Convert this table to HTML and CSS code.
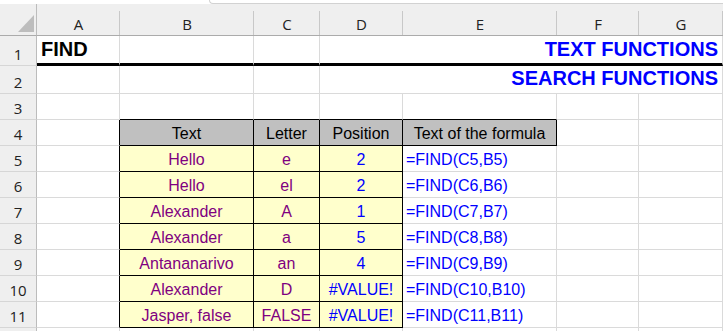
FILE: index.html
```html
<!DOCTYPE html>
<html>
<head>
<meta charset="utf-8">
<link rel="stylesheet" href="styles.css">
</head>
<body>
<div class="top"><div class="bar"></div></div>
<div class="sheet">
  <div class="corner"><svg width="16" height="17" viewBox="0 0 16 17"><polygon points="16,0 16,17 0,17" fill="#bdbdbd"/></svg></div>
  <div class="ch">A</div><div class="ch">B</div><div class="ch">C</div><div class="ch">D</div><div class="ch">E</div><div class="ch">F</div><div class="ch">G</div>

  <div class="rh">1</div>
  <div class="c thick title first">FIND</div><div class="c thick"></div><div class="c thick"></div>
  <div class="c thick title right span4">TEXT FUNCTIONS</div>

  <div class="rh">2</div>
  <div class="c"></div><div class="c"></div><div class="c"></div>
  <div class="c title right span4 r2">SEARCH FUNCTIONS</div>

  <div class="rh">3</div>
  <div class="c"></div><div class="c tt"></div><div class="c tt"></div><div class="c tt"></div><div class="c tt"></div><div class="c"></div><div class="c"></div>

  <div class="rh">4</div>
  <div class="c tl"></div><div class="c th">Text</div><div class="c th">Letter</div><div class="c th">Position</div><div class="c th">Text of the formula</div><div class="c"></div><div class="c"></div>

  <div class="rh">5</div>
  <div class="c tl"></div><div class="c td">Hello</div><div class="c td">e</div><div class="c td num">2</div><div class="c f">=FIND(C5,B5)</div><div class="c"></div><div class="c"></div>

  <div class="rh">6</div>
  <div class="c tl"></div><div class="c td">Hello</div><div class="c td">el</div><div class="c td num">2</div><div class="c f">=FIND(C6,B6)</div><div class="c"></div><div class="c"></div>

  <div class="rh">7</div>
  <div class="c tl"></div><div class="c td">Alexander</div><div class="c td">A</div><div class="c td num">1</div><div class="c f">=FIND(C7,B7)</div><div class="c"></div><div class="c"></div>

  <div class="rh">8</div>
  <div class="c tl"></div><div class="c td">Alexander</div><div class="c td">a</div><div class="c td num">5</div><div class="c f">=FIND(C8,B8)</div><div class="c"></div><div class="c"></div>

  <div class="rh">9</div>
  <div class="c tl"></div><div class="c td">Antananarivo</div><div class="c td">an</div><div class="c td num">4</div><div class="c f">=FIND(C9,B9)</div><div class="c"></div><div class="c"></div>

  <div class="rh">10</div>
  <div class="c tl"></div><div class="c td">Alexander</div><div class="c td">D</div><div class="c td num">#VALUE!</div><div class="c f">=FIND(C10,B10)</div><div class="c"></div><div class="c"></div>

  <div class="rh">11</div>
  <div class="c tl"></div><div class="c td">Jasper, false</div><div class="c td">FALSE</div><div class="c td num">#VALUE!</div><div class="c f">=FIND(C11,B11)</div><div class="c"></div><div class="c"></div>

  <div class="rh"></div>
  <div class="c"></div><div class="c"></div><div class="c"></div><div class="c"></div><div class="c"></div><div class="c"></div><div class="c"></div>
</div>
</body>
</html>
```
FILE: styles.css
```css
* { box-sizing: border-box; }
html, body { margin: 0; padding: 0; background: #ffffff; overflow: hidden; }
body { width: 723px; height: 331px; }

.top { height: 4px; display: flex; background: #ffffff; }
.bar {
  margin-left: 209px;
  flex: 1;
  border-left: 1px solid #d2d2d2;
  border-bottom: 1px solid #d2d2d2;
  border-bottom-left-radius: 4px;
}

.sheet {
  display: grid;
  grid-template-columns: 37px 83px 134px 66px 83px 154px 82px 84px;
  grid-template-rows: 32px 30px 28px repeat(9, 26px) 4px;
  font-family: "Liberation Sans", Arial, sans-serif;
  font-size: 16px;
}

.corner {
  background: #efefef;
  border-right: 1px solid #bcbcbc;
  border-bottom: 1px solid #ababab;
  display: flex;
  align-items: flex-end;
  justify-content: flex-end;
  padding: 0 2px 3px 0;
}
.corner svg { display: block; }

.ch {
  background: linear-gradient(#c8c8c8, #c8c8c8) right bottom / 1px 24px no-repeat, #efefef;
  border-bottom: 1px solid #ababab;
  font-family: "Open Sans", "Noto Sans", sans-serif;
  font-size: 15px;
  line-height: 20px;
  color: #222222;
  display: flex;
  align-items: flex-end;
  justify-content: center;
  padding-bottom: 1px;
}

.rh {
  background: #efefef;
  border-right: 1px solid #bcbcbc;
  border-bottom: 1px solid #d6d6d6;
  font-family: "Open Sans", "Noto Sans", sans-serif;
  font-size: 15px;
  line-height: 20px;
  color: #222222;
  display: flex;
  align-items: flex-end;
  justify-content: center;
  padding-bottom: 1px;
}

.c {
  border-right: 1px solid #dadada;
  border-bottom: 1px solid #dadada;
  display: flex;
  align-items: flex-end;
  padding: 0 3px 2px 3px;
  line-height: 18px;
  white-space: nowrap;
  overflow: hidden;
}

.thick { border-bottom: 3px solid #000000; }
.title {
  font-weight: bold;
  font-size: 20px;
  line-height: 23px;
  padding-bottom: 2px;
}
.first { padding-left: 4px; }
.r2 { padding-bottom: 3px; }
.right { justify-content: flex-end; color: #0000ff; padding-right: 4px; }
.span4 { grid-column: span 4; border-right-color: #dadada; }

.tt { border-bottom-color: #000000; }
.tl { border-right-color: #000000; }

.th {
  background: #c0c0c0;
  border-right-color: #000000;
  border-bottom-color: #000000;
  justify-content: center;
  color: #000000;
}
.td {
  background: #ffffcc;
  border-right-color: #000000;
  border-bottom-color: #000000;
  justify-content: center;
  color: #800080;
}
.num { color: #0000ff; }
.f { color: #0000ff; padding-left: 3px; }
```
